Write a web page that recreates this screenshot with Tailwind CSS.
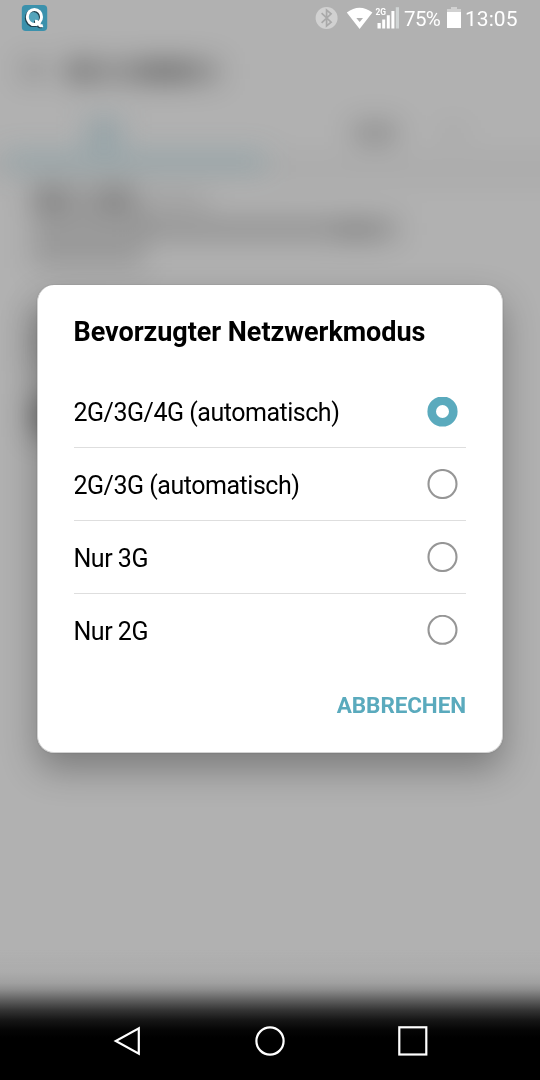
<!DOCTYPE html>
<html lang="de">
<head>
<meta charset="utf-8">
<title>Netzwerkmodus</title>
<script src="https://cdn.jsdelivr.net/npm/@tailwindcss/browser@4"></script>
</head>
<body class="font-[Roboto,sans-serif]">
<div class="relative flex h-[1080px] w-[540px] flex-col overflow-hidden bg-[#b1b1b1]">
  <!-- blurred settings page behind the dialog -->
  <svg class="absolute inset-0" width="540" height="1080" viewBox="0 0 540 1080">
    <defs><filter id="b" filterUnits="userSpaceOnUse" x="-80" y="0" width="700" height="600" color-interpolation-filters="sRGB"><feGaussianBlur stdDeviation="14"/></filter></defs>
    <g filter="url(#b)">
      <g fill="#000">
        <rect x="21" y="61" width="24" height="18" opacity=".2"/>
        <rect x="66" y="60" width="28" height="22" opacity=".34"/>
        <rect x="96" y="61" width="124" height="21" opacity=".22"/>
        <rect x="138" y="61" width="54" height="20" opacity=".2"/>
        <rect x="353" y="123" width="44" height="20" opacity=".2"/>
        <rect x="440" y="128" width="26" height="8" opacity=".07"/>
        <rect x="-60" y="158" width="700" height="22" opacity=".035"/>
        <rect x="32" y="187" width="34" height="22" opacity=".28"/>
        <rect x="66" y="187" width="34" height="22" opacity=".14"/>
        <rect x="100" y="187" width="34" height="22" opacity=".28"/>
        <rect x="32" y="210" width="112" height="58" opacity=".13"/>
        <rect x="138" y="195" width="70" height="14" opacity=".12"/>
        <rect x="140" y="219" width="258" height="20" opacity=".18"/>
        <rect x="336" y="222" width="40" height="18" opacity=".1"/>
        <rect x="28" y="310" width="80" height="60" opacity=".12"/>
        <rect x="32" y="395" width="80" height="42" opacity=".34"/>
      </g>
      <rect x="86" y="118" width="36" height="30" fill="#4c7f8c" opacity=".28"/>
      <rect x="4" y="152" width="262" height="18" fill="#3f8496" opacity=".23"/>
    </g>
  </svg>

  <header class="relative flex h-[36px] shrink-0 items-center justify-between pl-[21px] pr-[22px] text-white">
    <svg width="27" height="28" viewBox="0 0 27 28">
      <rect x=".8" y="1" width="25.4" height="26" rx="4" fill="#3b91ac"/>
      <ellipse cx="14" cy="13" rx="8" ry="8" fill="#55a4bb"/>
      <g fill="none" stroke-width="3">
        <g stroke="#203f4c" transform="translate(-1 1)"><ellipse cx="13.4" cy="13" rx="7.1" ry="7.6"/><path d="M14 17.3 Q17.5 17.5 18.3 20.5 Q19 22.5 21.8 21.5"/></g>
        <g stroke="#fff"><ellipse cx="13.4" cy="13" rx="7.1" ry="7.6"/><path d="M14 17.3 Q17.5 17.5 18.3 20.5 Q19 22.5 21.8 21.5"/></g>
      </g>
    </svg>
    <div class="flex items-center">
      <svg width="90" height="30" viewBox="312 3 90 30">
        <circle cx="326.6" cy="18" r="11" fill="#d1d1d1"/>
        <path d="M321.6 13.2 L331.1 22.2 L326.6 26 V10 L331.1 13.8 L321.6 22.8" fill="none" stroke="#a9a9a9" stroke-width="1.7"/>
        <path fill-rule="evenodd" fill="#fff" d="M346.8 12.6 Q359.5 3 372.4 12.6 L359.6 29 Z M356.3 18 H363 L359.7 22 Z"/>
        <text x="375.4" y="14.6" font-size="8.5" font-weight="700" textLength="10.6" lengthAdjust="spacingAndGlyphs" fill="#fff">2G</text>
        <path fill="#fff" d="M377.5 23h3.3v5.5h-3.3z M382.2 19.5h3v9h-3z M386.8 15.3h3v13.2h-3z M391.4 11h3v17.5h-3z"/>
        <path fill="#d1d5d5" d="M395.8 7.2h3.2v21.3h-3.2z"/>
      </svg>
      <span class="ml-[2px] w-[43px] whitespace-nowrap pt-[2px] text-[20.5px] leading-6 tracking-[-0.6px]">75%</span>
      <svg width="14" height="22" viewBox="0 0 14 22"><path fill="#d1d1d1" d="M4 0h6v2h4v4H0V2h4z"/><path fill="#fff" d="M0 5h14v16H0z"/></svg>
      <span class="ml-[4px] w-[53px] whitespace-nowrap pt-[2px] text-[21px] leading-6 tracking-[0.05px]">13:05</span>
    </div>
  </header>

  <main class="relative flex grow flex-col px-[37px] pt-[249px]">
    <section class="flex h-[468px] flex-col rounded-[17px] border-x border-b border-[#d2d2d2] bg-white pl-[35.5px] pr-[36px] text-black shadow-[0_16px_36px_rgba(0,0,0,0.30),0_0_2px_rgba(0,0,0,0.2)]">
      <h1 class="flex h-[91px] items-center whitespace-nowrap pt-[4px] text-[27px] font-bold tracking-[-0.04px]">Bevorzugter Netzwerkmodus</h1>
      <ul class="flex flex-col text-[25px] tracking-[-0.48px]">
        <li class="flex h-[72px] items-center justify-between border-b border-[#dedede] pr-[8px]"><span class="whitespace-nowrap pt-[2px]">2G/3G/4G (automatisch)</span>
          <svg width="31" height="30"><circle cx="15.5" cy="14.5" r="10.8" fill="none" stroke="#5aaabd" stroke-width="8.6"/></svg></li>
        <li class="flex h-[73px] items-center justify-between border-b border-[#dedede] pr-[8px]"><span class="whitespace-nowrap pt-[4px]">2G/3G (automatisch)</span>
          <svg width="31" height="30"><circle cx="15.5" cy="15" r="14" fill="none" stroke="#969696" stroke-width="2.1"/></svg></li>
        <li class="flex h-[73px] items-center justify-between border-b border-[#dedede] pr-[8px]"><span class="pt-[4px]">Nur 3G</span>
          <svg width="31" height="30"><circle cx="15.5" cy="15" r="14" fill="none" stroke="#969696" stroke-width="2.1"/></svg></li>
        <li class="flex h-[72px] items-center justify-between pr-[8px]"><span class="pt-[4px]">Nur 2G</span>
          <svg width="31" height="30"><circle cx="15.5" cy="14.8" r="14" fill="none" stroke="#969696" stroke-width="2.1"/></svg></li>
      </ul>
      <div class="flex h-[78px] items-center justify-end whitespace-nowrap pt-[2px] text-[22.5px] font-bold tracking-[-0.1px] text-[#5aaabd]">ABBRECHEN</div>
    </section>
  </main>

  <nav class="relative h-[130px] shrink-0 bg-[linear-gradient(to_bottom,#b1b1b100_0px,#acacac_22px,#a0a0a0_33px,#8c8c8c_40px,#606060_50px,#353535_60px,#161616_70px,#050505_80px,#000_88px)]">
    <svg width="540" height="130" viewBox="0 950 540 130" fill="none" stroke="#fff" stroke-width="2.2">
      <path d="M138.8 1028.3 V1053.7 L115.8 1041 Z"/>
      <circle cx="270" cy="1041" r="13.6"/>
      <rect x="399.3" y="1027.3" width="27" height="27.2"/>
    </svg>
  </nav>
</div>
</body>
</html>
